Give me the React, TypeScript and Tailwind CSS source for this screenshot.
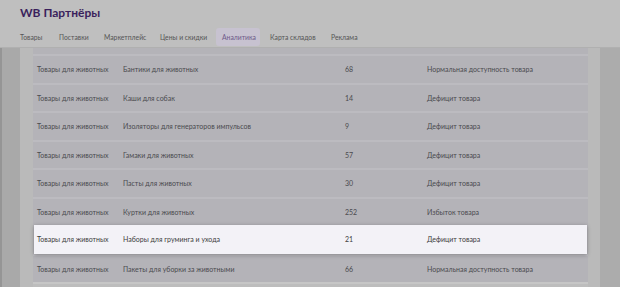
const tabs = [
  { label: "Товары", cls: "w-[39px]" },
  { label: "Поставки", cls: "w-[45px]" },
  { label: "Маркетплейс", cls: "w-[56px]" },
  { label: "Цены и скидки", cls: "w-[56px]" },
  { label: "Аналитика", cls: "w-[44px] mr-[10px] px-[6px] rounded-[3px] bg-[#c7c2d0] text-[#6e5a8a]" },
  { label: "Карта складов", cls: "w-[61px]" },
  { label: "Реклама", cls: "" },
];

const rows = [
  { cat: "Товары для животных", name: "Бантики для животных", qty: "68", status: "Нормальная доступность товара" },
  { cat: "Товары для животных", name: "Каши для собак", qty: "14", status: "Дефицит товара" },
  { cat: "Товары для животных", name: "Изоляторы для генераторов импульсов", qty: "9", status: "Дефицит товара" },
  { cat: "Товары для животных", name: "Гамаки для животных", qty: "57", status: "Дефицит товара" },
  { cat: "Товары для животных", name: "Пасты для животных", qty: "30", status: "Дефицит товара" },
  { cat: "Товары для животных", name: "Куртки для животных", qty: "252", status: "Избыток товара" },
  { cat: "Товары для животных", name: "Наборы для груминга и ухода", qty: "21", status: "Дефицит товара", active: true },
  { cat: "Товары для животных", name: "Пакеты для уборки за животными", qty: "66", status: "Нормальная доступность товара" },
];

export default function App() {
  return (
    <div
      className="w-[620px] h-[287px] overflow-hidden bg-[#bfbfbf] flex flex-col"
      style={{ fontFamily: "Lato, 'Noto Sans', sans-serif" }}
    >
      {/* header */}
      <div className="h-[48px] shrink-0 border-b border-[#b0b0b0] px-[20px] flex flex-col">
        <div className="pt-[5px] text-[12px] font-bold text-[#3a1f5c] leading-[16px]">WB Партнёры</div>
        <div className="flex items-center mt-[7px] text-[6.8px] text-[#555] whitespace-nowrap">
          {tabs.map((t) => (
            <span key={t.label} className={"py-[4px] shrink-0 " + t.cls}>
              {t.label}
            </span>
          ))}
        </div>
      </div>

      {/* body */}
      <div className="flex flex-1 min-h-0">
        <div className="w-[20px] bg-[#a9a9a9] border-l-[2px] border-[#959595]" />
        <div className="w-[13px] bg-[#bababa]" />
        <div className="flex-1 bg-[#b4b3b8] flex flex-col">
          <div className="h-[6px] shrink-0" />
          {rows.map((r, i) => (
            <div
              key={i}
              className={
                r.active
                  ? "h-[28.5px] shrink-0 flex items-center mx-[1px] bg-[#f3f2f7] shadow-[0_1px_4px_rgba(0,0,0,0.3)] relative z-10 text-[#3c3c3c]"
                  : "h-[28.5px] shrink-0 flex items-center border-t-[2px] border-[#bcbbc0] text-[#4a4a4e]"
              }
            >
              <div className={r.active ? "w-[89px] pl-[3px] text-[7px]" : "w-[90px] pl-[4px] text-[7px]"}>{r.cat}</div>
              <div className="w-[222px] text-[7px]">{r.name}</div>
              <div className="w-[82px] text-[7px]">{r.qty}</div>
              <div className="flex-1 text-[7px]">{r.status}</div>
            </div>
          ))}
          <div className="flex-1 border-t-[2px] border-[#c6c6c6] bg-[#bdbdbd]" />
        </div>
        <div className="w-[12px] bg-[#bababa]" />
        <div className="w-[20px] bg-[#acacac]" />
      </div>
    </div>
  );
}
